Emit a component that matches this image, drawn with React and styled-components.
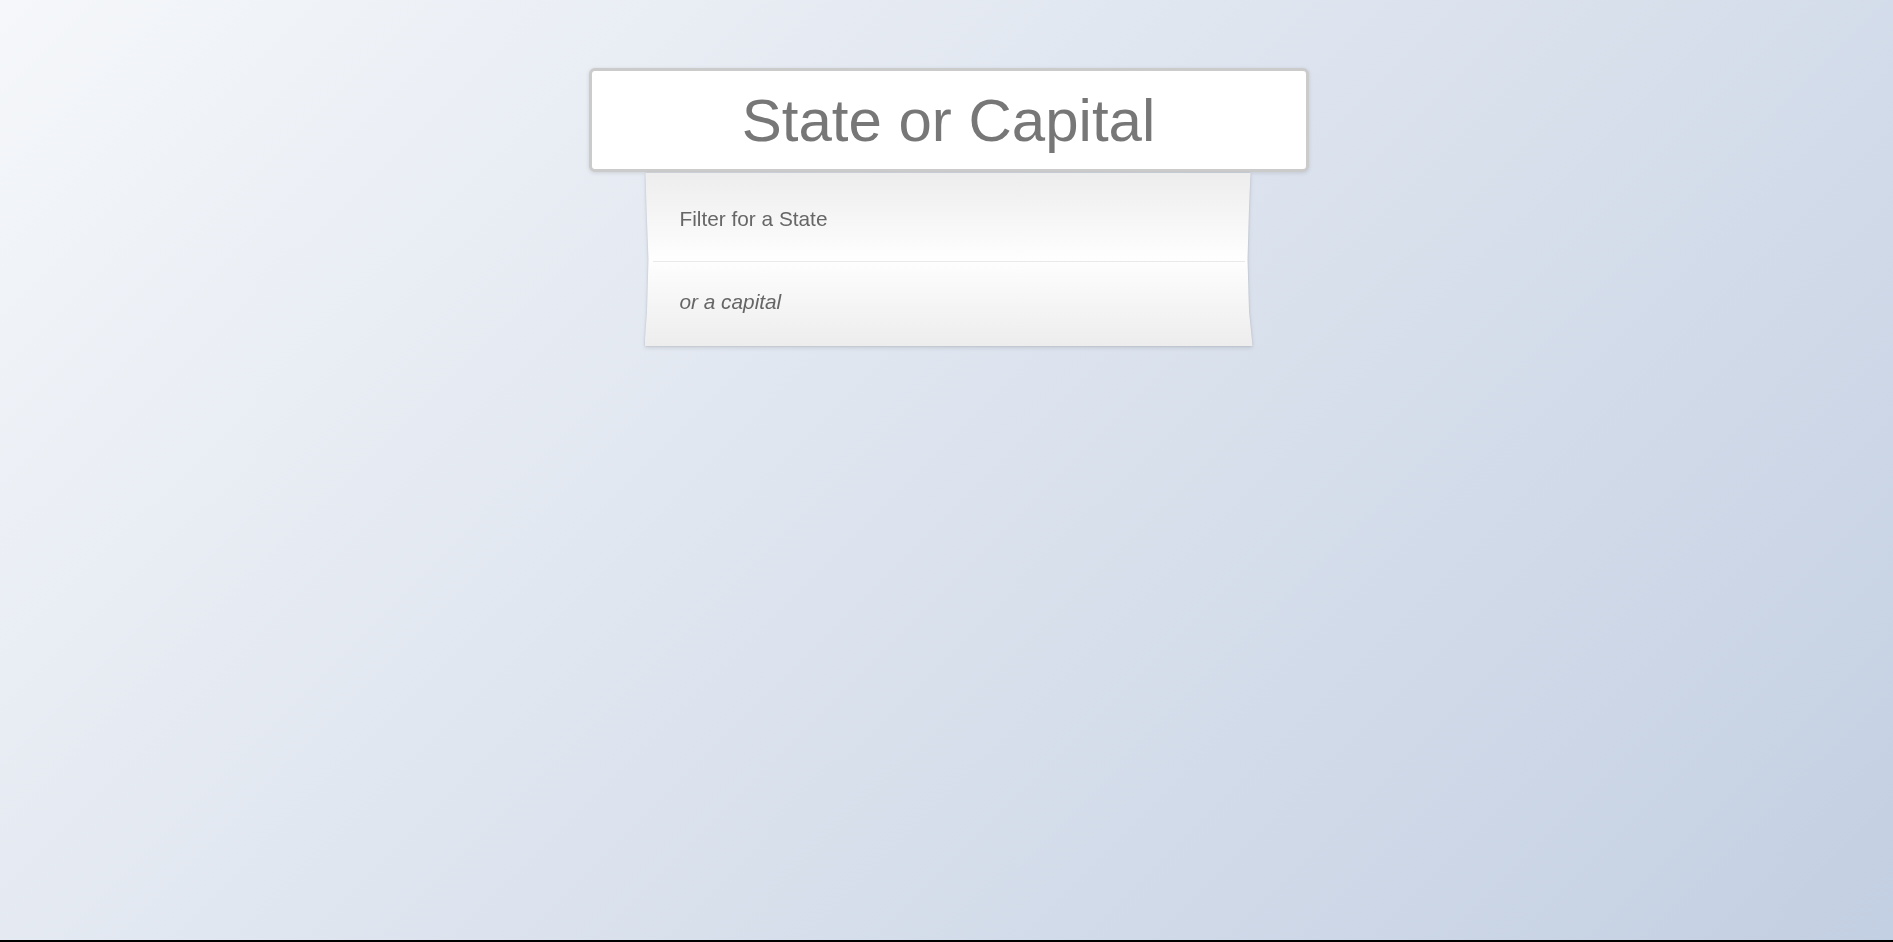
import styled, { createGlobalStyle } from "styled-components"

const GlobalStyle = createGlobalStyle`
    html {
        background: #000;
    }
    body {
        margin: 0;
        font-family: "Liberation Sans", Arial, sans-serif;
    }
`

const Page = styled.div`
    height: 940px;
    background: linear-gradient(135deg, #f5f7fa 0%, #c3cfe2 100%);
    display: flex;
    justify-content: center;
    padding: 68px 0 0 4px;
    box-sizing: border-box;
`

const Column = styled.div`
    width: 720px;
    display: flex;
    flex-direction: column;
`

const SearchBox = styled.input`
    width: 100%;
    height: 104px;
    box-sizing: border-box;
    border: 3px solid #cbcbcb;
    border-radius: 6px;
    background: #fff;
    box-shadow: 0 1px 4px rgba(0, 0, 0, 0.12);
    font-family: "Liberation Sans", Arial, sans-serif;
    font-size: 60px;
    color: #777;
    text-align: center;
    outline: none;
    padding: 0;

    &::placeholder {
        color: #777;
        opacity: 1;
    }
`

const Shadow = styled.div`
    margin: 1px 56px 0 56px;
    filter: drop-shadow(0 2px 2px rgba(0, 0, 0, 0.1)) drop-shadow(0 0 1px rgba(0, 0, 0, 0.12));
`

const List = styled.ul`
    list-style: none;
    margin: 0;
    padding: 4px 8px 0 8px;
    height: 173px;
    box-sizing: border-box;
    background: linear-gradient(#ededed 0%, #fefefe 50%, #ededed 100%);
    clip-path: polygon(
        1px 0, calc(100% - 2px) 0, calc(100% - 3.5px) 20%, calc(100% - 5px) 50%,
        calc(100% - 3.5px) 80%, 100% 100%, 0 100%, 2.5px 80%, 4px 50%, 2px 20%
    );
`

const Item = styled.li`
    height: ${p => (p.$last ? 80 : 84)}px;
    display: flex;
    align-items: center;
    padding: 0 27px;
    font-size: 20.8px;
    color: #666;
    font-style: ${p => (p.$italic ? "italic" : "normal")};
    border-bottom: ${p => (p.$last ? "none" : "1px solid #e9e9e9")};
`

export default function App() {
    return (
        <>
            <GlobalStyle />
            <Page>
                <Column>
                    <SearchBox placeholder="State or Capital" />
                    <Shadow>
                        <List>
                            <Item>Filter for a State</Item>
                            <Item $italic $last>or a capital</Item>
                        </List>
                    </Shadow>
                </Column>
            </Page>
        </>
    )
}
